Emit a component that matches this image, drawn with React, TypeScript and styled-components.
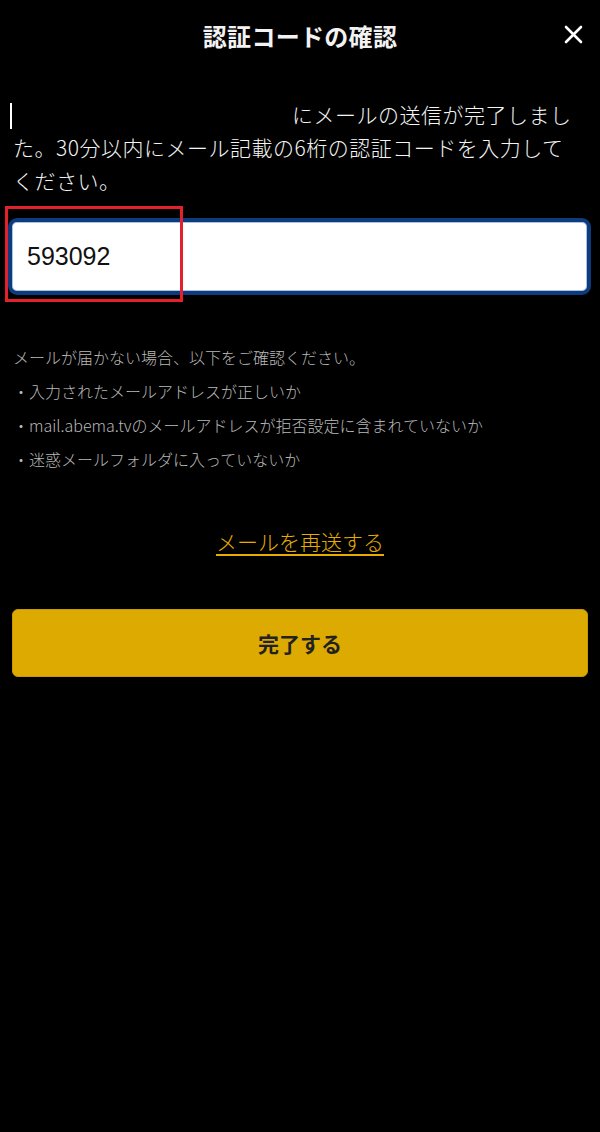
import React from "react";
import styled, { createGlobalStyle } from "styled-components";

const Global = createGlobalStyle`
  html, body { margin: 0; padding: 0; background: #000; }
  body { font-family: "Noto Sans CJK JP", "Noto Sans", sans-serif; }
  * { box-sizing: border-box; }
`;

const Page = styled.div`
  width: 600px;
  min-height: 1132px;
  background: #000;
  color: #fff;
  display: flex;
  flex-direction: column;
`;

const Header = styled.header`
  position: relative;
  height: 70px;
  display: flex;
  align-items: center;
  justify-content: center;
`;

const Title = styled.h1`
  margin: 0;
  font-size: 24px;
  font-weight: 700;
  letter-spacing: 0.3px;
  color: #f2f2f2;
`;

const CloseButton = styled.button`
  position: absolute;
  right: 17px;
  top: 24px;
  width: 20px;
  height: 20px;
  padding: 0;
  border: none;
  background: transparent;
  display: flex;
  align-items: center;
  justify-content: center;
`;

const Body = styled.main`
  display: flex;
  flex-direction: column;
  padding: 28px 0 0 0;
`;

const Lead = styled.p`
  margin: 0;
  padding: 0 20px 0 13px;
  font-size: 21px;
  font-weight: 300;
  line-height: 33px;
  letter-spacing: 0.5px;
  color: #f4f4f4;
`;

const Cursor = styled.span`
  display: inline-block;
  width: 2px;
  height: 26px;
  background: #fff;
  vertical-align: -6px;
  margin-left: -3px;
`;

const Redacted = styled.span`
  display: inline-block;
  width: 280px;
`;

const FieldWrap = styled.div`
  position: relative;
  margin: 21px 9px 0 8px;
`;

const CodeInput = styled.div`
  height: 77px;
  border: 4px solid #0d3b7d;
  border-radius: 9px;
  background: #fff;
  box-shadow: inset 0 0 0 1px #a9c2e2;
  display: flex;
  align-items: center;
  padding-left: 15px;
  font-family: "Liberation Sans", Arial, sans-serif;
  font-size: 25px;
  color: #111;
`;

const Highlight = styled.div`
  position: absolute;
  left: -3px;
  top: -12px;
  width: 178px;
  height: 96px;
  border: 3px solid #e3202b;
  pointer-events: none;
`;

const Help = styled.div`
  margin-top: 45px;
  padding: 0 13px;
  font-size: 16px;
  font-weight: 300;
  line-height: 34px;
  color: #b8b8b8;
`;

const HelpLine = styled.div`
  white-space: nowrap;
`;

const ResendRow = styled.div`
  margin-top: 50px;
  display: flex;
  justify-content: center;
`;

const ResendLink = styled.a`
  font-size: 21px;
  font-weight: 300;
  line-height: 30px;
  color: #e6ad00;
  text-decoration: underline;
  text-underline-offset: 4px;
  text-decoration-thickness: 1.5px;
`;

const SubmitButton = styled.button`
  margin: 53px 12px 0 12px;
  height: 68px;
  border: 1px solid #c99a00;
  border-radius: 6px;
  background: #dcaa00;
  color: #222;
  font-family: "Noto Sans CJK JP", "Noto Sans", sans-serif;
  font-size: 21px;
  font-weight: 700;
  display: flex;
  align-items: center;
  justify-content: center;
`;

export default function App() {
  return (
    <>
      <Global />
      <Page>
        <Header>
          <Title>認証コードの確認</Title>
          <CloseButton aria-label="閉じる">
            <svg width="19" height="19" viewBox="0 0 19 19">
              <path d="M2 2 L17 17 M17 2 L2 17" stroke="#fff" strokeWidth="2.6" strokeLinecap="round" />
            </svg>
          </CloseButton>
        </Header>
        <Body>
          <Lead>
            <Cursor />
            <Redacted />
            にメールの送信が完了しました。30分以内にメール記載の6桁の認証コードを入力してください。
          </Lead>
          <FieldWrap>
            <CodeInput>593092</CodeInput>
            <Highlight />
          </FieldWrap>
          <Help>
            <HelpLine>メールが届かない場合、以下をご確認ください。</HelpLine>
            <HelpLine>・入力されたメールアドレスが正しいか</HelpLine>
            <HelpLine>・mail.abema.tvのメールアドレスが拒否設定に含まれていないか</HelpLine>
            <HelpLine>・迷惑メールフォルダに入っていないか</HelpLine>
          </Help>
          <ResendRow>
            <ResendLink>メールを再送する</ResendLink>
          </ResendRow>
          <SubmitButton>完了する</SubmitButton>
        </Body>
      </Page>
    </>
  );
}
